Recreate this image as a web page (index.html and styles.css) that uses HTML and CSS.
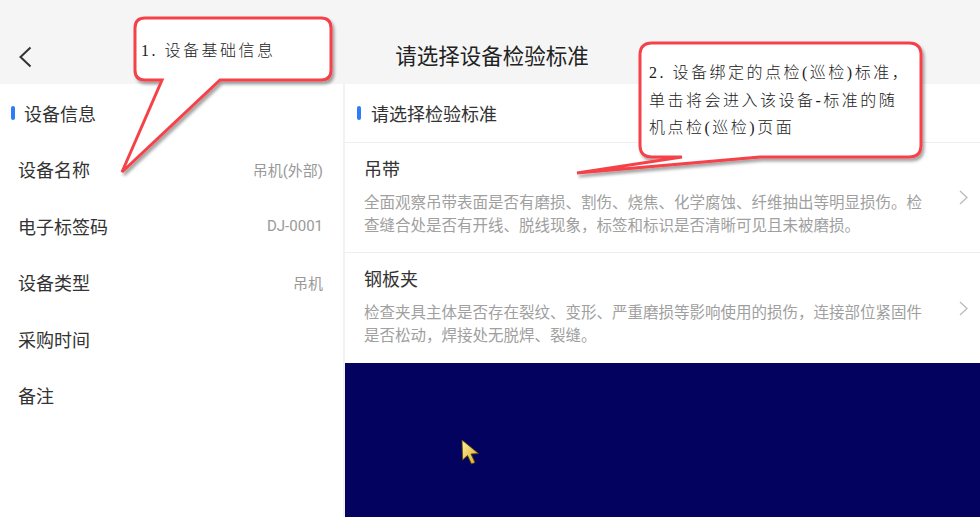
FILE: index.html
```html
<!DOCTYPE html>
<html lang="zh-CN">
<head>
<meta charset="utf-8">
<title>请选择设备检验标准</title>
<link rel="stylesheet" href="styles.css">
</head>
<body>
<div class="page">
  <header class="header">
    <div class="back">
      <svg width="14" height="22" viewBox="0 0 14 22"><path d="M12.5 1.5 L2.5 11 L12.5 20.5" fill="none" stroke="#333" stroke-width="2"/></svg>
    </div>
    <div class="title">请选择设备检验标准</div>
    <div></div>
  </header>
  <main class="main">
    <section class="left">
      <div class="sec-head"><span class="bar"></span><span>设备信息</span></div>
      <div class="row"><span class="label">设备名称</span><span class="value">吊机(外部)</span></div>
      <div class="row"><span class="label">电子标签码</span><span class="value">DJ-0001</span></div>
      <div class="row"><span class="label">设备类型</span><span class="value">吊机</span></div>
      <div class="row"><span class="label">采购时间</span><span class="value"></span></div>
      <div class="row"><span class="label">备注</span><span class="value"></span></div>
    </section>
    <section class="right">
      <div class="sec-head sec-head-r"><span class="bar"></span><span>请选择检验标准</span></div>
      <div class="item item-first">
        <div class="item-body">
          <div class="item-title">吊带</div>
          <div class="item-desc">全面观察吊带表面是否有磨损、割伤、烧焦、化学腐蚀、纤维抽出等明显损伤。检查缝合处是否有开线、脱线现象，标签和标识是否清晰可见且未被磨损。</div>
        </div>
        <svg class="chev" width="9" height="15" viewBox="0 0 9 15"><path d="M1 1 L8 7.5 L1 14" fill="none" stroke="#bbb" stroke-width="1.3"/></svg>
      </div>
      <div class="item">
        <div class="item-body">
          <div class="item-title">钢板夹</div>
          <div class="item-desc">检查夹具主体是否存在裂纹、变形、严重磨损等影响使用的损伤，连接部位紧固件是否松动，焊接处无脱焊、裂缝。</div>
        </div>
        <svg class="chev" width="9" height="15" viewBox="0 0 9 15"><path d="M1 1 L8 7.5 L1 14" fill="none" stroke="#bbb" stroke-width="1.3"/></svg>
      </div>
      <div class="blank"></div>
    </section>
  </main>

  <svg class="overlay" width="980" height="517" viewBox="0 0 980 517">
    <defs>
      <filter id="sh" x="-10%" y="-10%" width="130%" height="140%">
        <feDropShadow dx="2" dy="3" stdDeviation="1.6" flood-color="#000" flood-opacity="0.35"/>
      </filter>
      <linearGradient id="cg" x1="0" y1="0" x2="1" y2="1">
        <stop offset="0" stop-color="#fff2a0"/>
        <stop offset="1" stop-color="#d9a628"/>
      </linearGradient>
    </defs>
    <path filter="url(#sh)" d="M145 18 H321 Q331 18 331 28 V70 Q331 80 321 80 H220 L122 172 L162 80 H145 Q135 80 135 70 V28 Q135 18 145 18 Z" fill="#fff" stroke="#f5424a" stroke-width="3" stroke-linejoin="miter"/>
    <path filter="url(#sh)" d="M652 43 H909 Q921 43 921 55 V145 Q921 157 909 157 H760 L577 173 L682 157 H652 Q640 157 640 145 V55 Q640 43 652 43 Z" fill="#fff" stroke="#f5424a" stroke-width="3" stroke-linejoin="miter"/>
    <path d="M462 440 L462.5 460 L467.5 455.5 L471.5 464 L475 462.5 L471 454 L478.5 453.5 Z" fill="url(#cg)" stroke="#5a4708" stroke-width="0.9" stroke-linejoin="round"/>
  </svg>
  <div class="note note1">1. 设备基础信息</div>
  <div class="note note2">2. 设备绑定的点检(巡检)标准，<br>单击将会进入该设备-标准的随<br>机点检(巡检)页面</div>
</div>
</body>
</html>
```
FILE: styles.css
```css
* { box-sizing: border-box; }
html, body { margin: 0; padding: 0; }
body {
  font-family: Roboto, "Noto Sans CJK SC", sans-serif;
  color: #333;
  background: #fff;
}
.page {
  position: relative;
  width: 980px;
  height: 517px;
  overflow: hidden;
  display: flex;
  flex-direction: column;
}
.header {
  height: 84px;
  flex: 0 0 84px;
  background: #f5f5f5;
  display: grid;
  grid-template-columns: 1fr auto 1fr;
  align-items: center;
  padding-top: 30px;
}
.back {
  padding-left: 18px;
  display: flex;
  align-items: center;
  height: 22px;
}
.title {
  font-size: 21.5px;
  line-height: 28px;
  color: #222;
  padding-left: 4px;
}
.main {
  flex: 1;
  display: flex;
  min-height: 0;
}
.left {
  width: 345px;
  flex: 0 0 345px;
  border-right: 2px solid #f2f2f2;
  background: #fff;
}
.sec-head {
  height: 58px;
  display: flex;
  align-items: center;
  gap: 9px;
  padding-left: 11px;
  font-size: 18px;
  color: #333;
}
.bar {
  width: 4px;
  height: 14px;
  border-radius: 2px;
  background: #2e7cf6;
}
.row {
  height: 56.5px;
  display: flex;
  align-items: center;
  justify-content: space-between;
  padding: 0 20px 2px 18px;
}
.label { font-size: 18px; color: #333; }
.value { font-size: 15px; color: #999; }
.right {
  flex: 1;
  display: flex;
  flex-direction: column;
  background: #fff;
}
.sec-head-r {
  padding-left: 12px;
  gap: 10px;
  height: 59px;
  border-bottom: 1px solid #eeeeee;
}
.item {
  height: 110px;
  display: flex;
  align-items: center;
  padding: 0 13px 0 19px;
  gap: 25px;
}
.item-first { border-bottom: 1px solid #eeeeee; }
.item-body {
  width: 570px;
  flex: 0 0 570px;
  align-self: flex-start;
  padding-top: 15px;
}
.item-title {
  font-size: 18px;
  line-height: 24px;
  color: #333;
}
.item-desc {
  margin-top: 10px;
  font-size: 15.5px;
  line-height: 23px;
  color: #a0a0a0;
}
.chev { flex: 0 0 auto; }
.blank {
  flex: 1;
  background: #03035f;
}
.overlay {
  position: absolute;
  left: 0;
  top: 0;
  pointer-events: none;
}
.note {
  position: absolute;
  font-family: "Liberation Serif", "Noto Sans CJK SC", serif;
  font-weight: 300;
  font-size: 16px;
  letter-spacing: 2.5px;
  color: #1a1a1a;
  white-space: nowrap;
}
.note1 {
  left: 141px;
  top: 39px;
  line-height: 24px;
}
.note2 {
  left: 649px;
  top: 59px;
  line-height: 27.5px;
}
```
